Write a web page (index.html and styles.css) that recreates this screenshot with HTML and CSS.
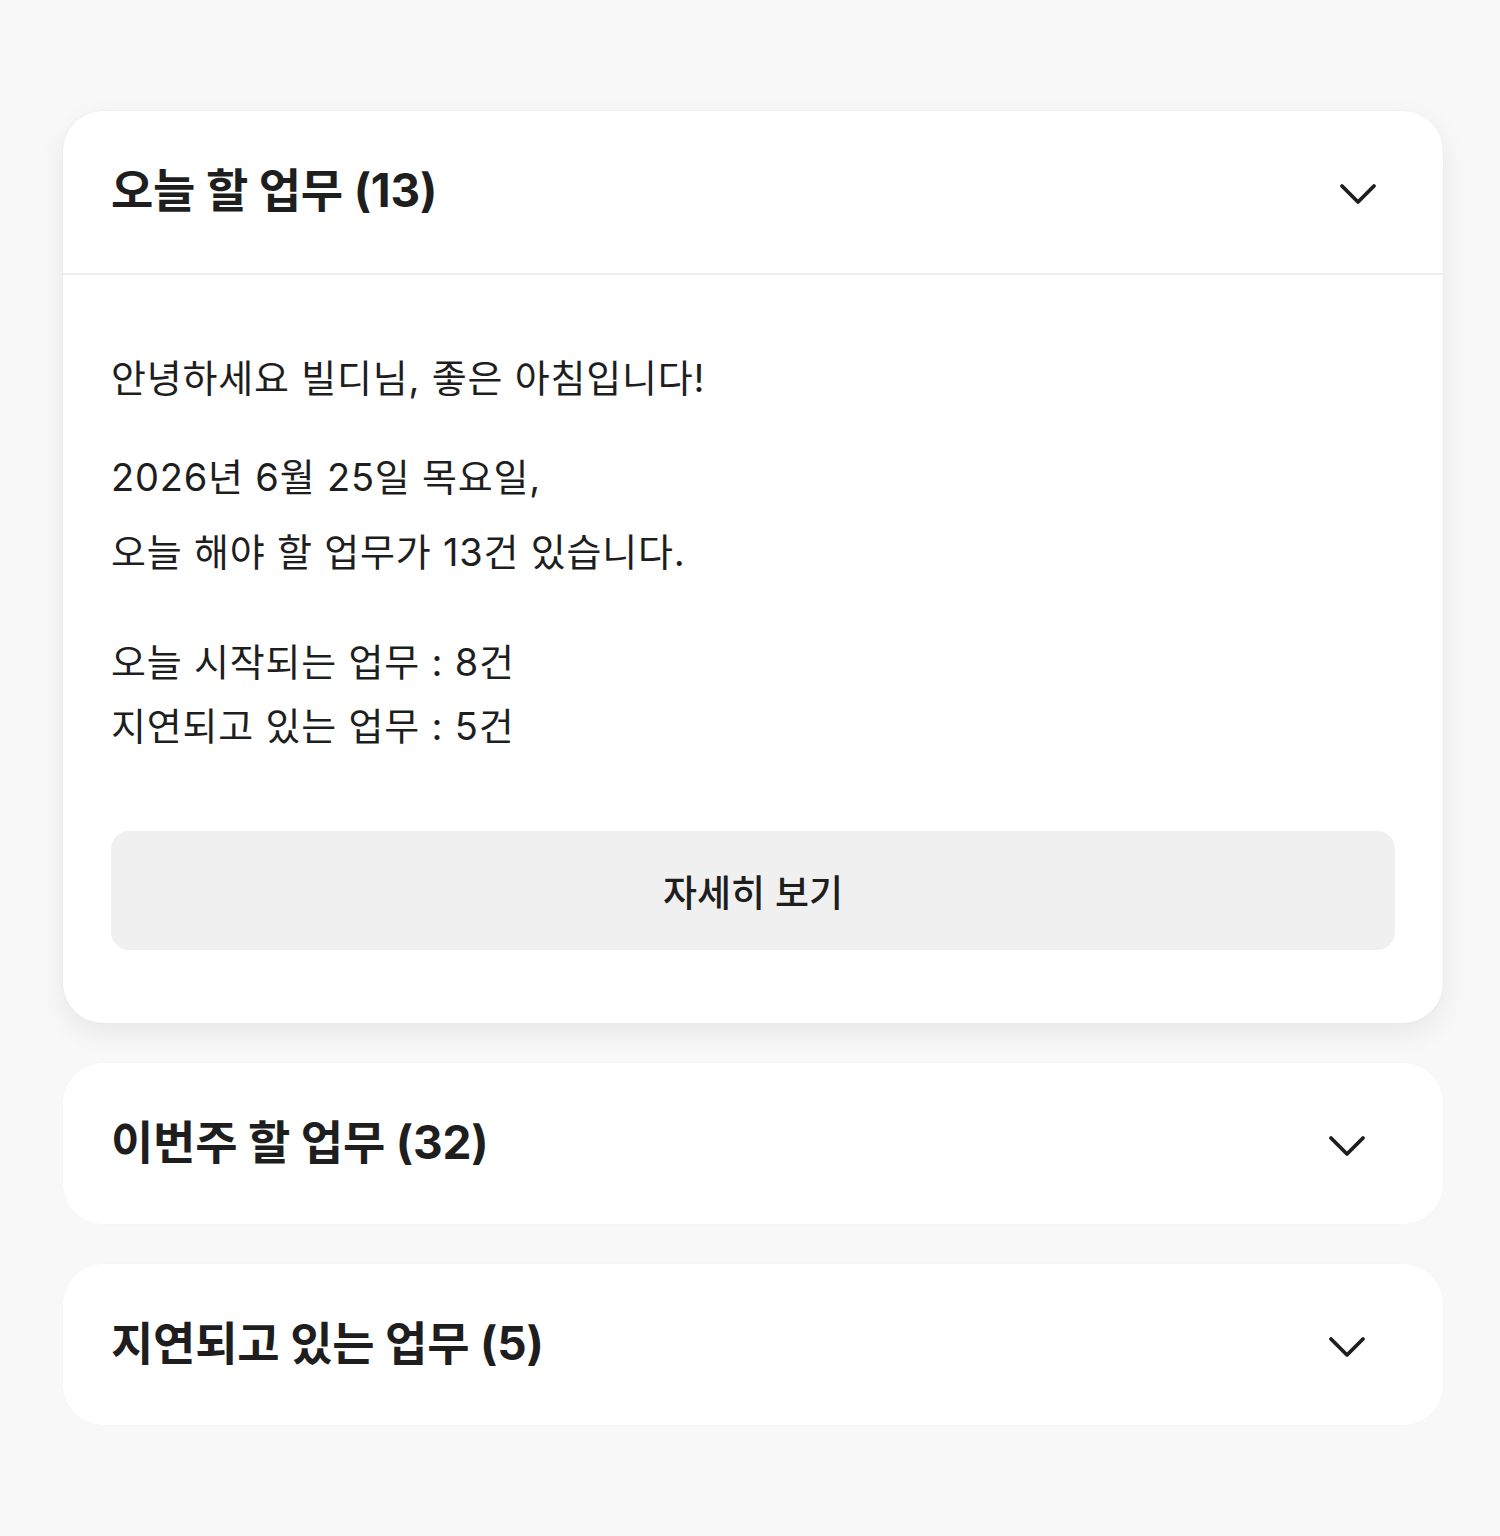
FILE: index.html
```html
<!DOCTYPE html>
<html lang="ko">
<head>
<meta charset="utf-8">
<link rel="stylesheet" href="styles.css">
</head>
<body>
<main class="page">
  <section class="card card--open">
    <div class="card-head card-head--open">
      <h2 class="card-title">오늘 할 업무 (13)</h2>
      <svg class="chev" viewBox="0 0 24 24" width="48" height="48"><path d="M4 9l8 8 8-8" fill="none" stroke="#1e1e1e" stroke-width="1.9" stroke-linecap="round" stroke-linejoin="round"/></svg>
    </div>
    <div class="card-body">
      <p class="greet">안녕하세요 빌디님, 좋은 아침입니다!</p>
      <p class="summary">2026년 6월 25일 목요일,<br>오늘 해야 할 업무가 13건 있습니다.</p>
      <p class="counts">오늘 시작되는 업무 : 8건<br>지연되고 있는 업무 : 5건</p>
      <button class="more">자세히 보기</button>
    </div>
  </section>
  <section class="card">
    <div class="card-head">
      <h2 class="card-title">이번주 할 업무 (32)</h2>
      <svg class="chev" viewBox="0 0 24 24" width="48" height="48"><path d="M4 9l8 8 8-8" fill="none" stroke="#1e1e1e" stroke-width="1.9" stroke-linecap="round" stroke-linejoin="round"/></svg>
    </div>
  </section>
  <section class="card">
    <div class="card-head">
      <h2 class="card-title">지연되고 있는 업무 (5)</h2>
      <svg class="chev" viewBox="0 0 24 24" width="48" height="48"><path d="M4 9l8 8 8-8" fill="none" stroke="#1e1e1e" stroke-width="1.9" stroke-linecap="round" stroke-linejoin="round"/></svg>
    </div>
  </section>
</main>
</body>
</html>
```
FILE: styles.css
```css
html, body {
  margin: 0;
  padding: 0;
  background: #f8f8f8;
}
body {
  font-family: Inter, "Noto Sans CJK KR", sans-serif;
  color: #1e1e1e;
}
.page {
  display: flex;
  flex-direction: column;
  gap: 40px;
  padding: 111px 57px 100px 63px;
}
.card {
  background: #fff;
  border-radius: 40px;
  box-shadow: 0 0 2px rgba(0,0,0,0.03);
}
.card--open {
  box-shadow: 0 10px 28px rgba(0,0,0,0.07), 0 0 2px rgba(0,0,0,0.05);
}
.card-head {
  height: 161px;
  display: flex;
  align-items: center;
  justify-content: space-between;
  padding: 0 72px 0 48px;
}
.card-head--open {
  height: 162px;
  border-bottom: 2px solid #efefef;
  padding-right: 61px;
}
.card-title {
  margin: 0;
  font-size: 46px;
  font-weight: 700;
  letter-spacing: -0.2px;
  line-height: 1.2;
  padding-bottom: 2px;
}
.chev {
  display: block;
}
.card-body {
  padding: 78px 48px 73px;
  font-size: 38px;
  letter-spacing: 0.8px;
}
.card-body p {
  margin: 0;
}
.greet {
  line-height: 50px;
}
.summary {
  margin-top: 37px !important;
  line-height: 75px;
}
.counts {
  margin-top: 40px !important;
  line-height: 64px;
}
.more {
  display: block;
  width: 100%;
  height: 119px;
  margin-top: 73px;
  border: 0;
  border-radius: 18px;
  background: #f0f0f0;
  font-family: Inter, "Noto Sans CJK KR", sans-serif;
  font-size: 37px;
  letter-spacing: 0;
  font-weight: 500;
  color: #1e1e1e;
}
```
